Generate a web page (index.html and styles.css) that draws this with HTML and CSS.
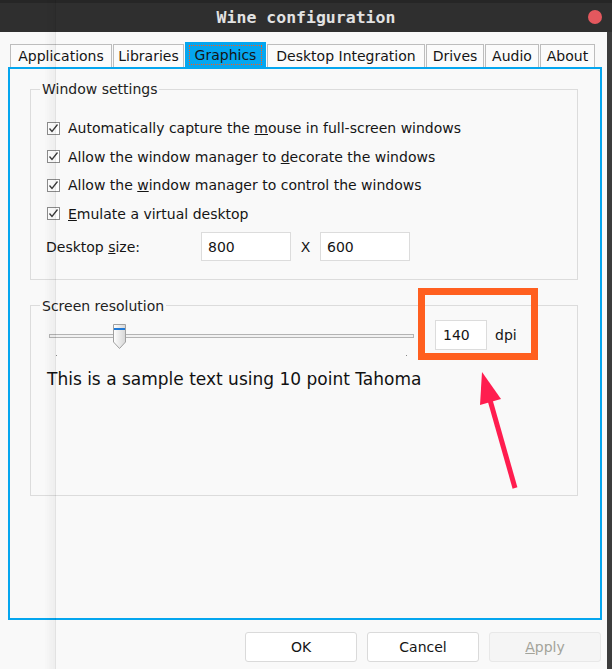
FILE: index.html
```html
<!DOCTYPE html>
<html>
<head>
<meta charset="utf-8">
<title>Wine configuration</title>
<link rel="stylesheet" href="styles.css">
</head>
<body>
<div class="screen">
  <header class="titlebar">
    <span></span>
    <span class="title">Wine configuration</span>
    <span class="close"></span>
  </header>
  <div class="body">
    <main class="dialog">
      <nav class="tabs">
        <div class="tab tab-apps">Applications</div>
        <div class="tab tab-libs">Libraries</div>
        <div class="tab tab-gfx active"><span class="focus">Graphics</span></div>
        <div class="tab tab-desk">Desktop Integration</div>
        <div class="tab tab-drives">Drives</div>
        <div class="tab tab-audio">Audio</div>
        <div class="tab tab-about">About</div>
      </nav>
      <section class="panel">
        <fieldset class="group g1">
          <legend>Window settings</legend>
          <div class="checks">
            <label class="check"><svg class="box" width="13" height="13" viewBox="0 0 13 13"><rect x="0.5" y="0.5" width="12" height="12" fill="#fff" stroke="#8c8c8c"/><path d="M2.5 6.5 L5 9.5 L10.5 2.5" fill="none" stroke="#3a3a3a" stroke-width="1.3"/></svg><span>Automatically capture the <u>m</u>ouse in full-screen windows</span></label>
            <label class="check"><svg class="box" width="13" height="13" viewBox="0 0 13 13"><rect x="0.5" y="0.5" width="12" height="12" fill="#fff" stroke="#8c8c8c"/><path d="M2.5 6.5 L5 9.5 L10.5 2.5" fill="none" stroke="#3a3a3a" stroke-width="1.3"/></svg><span>Allow the window manager to <u>d</u>ecorate the windows</span></label>
            <label class="check"><svg class="box" width="13" height="13" viewBox="0 0 13 13"><rect x="0.5" y="0.5" width="12" height="12" fill="#fff" stroke="#8c8c8c"/><path d="M2.5 6.5 L5 9.5 L10.5 2.5" fill="none" stroke="#3a3a3a" stroke-width="1.3"/></svg><span>Allow the <u>w</u>indow manager to control the windows</span></label>
            <label class="check"><svg class="box" width="13" height="13" viewBox="0 0 13 13"><rect x="0.5" y="0.5" width="12" height="12" fill="#fff" stroke="#8c8c8c"/><path d="M2.5 6.5 L5 9.5 L10.5 2.5" fill="none" stroke="#3a3a3a" stroke-width="1.3"/></svg><span><u>E</u>mulate a virtual desktop</span></label>
          </div>
          <div class="size-row">
            <span class="size-label">Desktop <u>s</u>ize:</span>
            <div class="field size">800</div>
            <span class="times">X</span>
            <div class="field size">600</div>
          </div>
        </fieldset>
        <fieldset class="group g2">
          <legend>Screen resolution</legend>
          <div class="res-row">
            <div class="slider">
              <div class="track"></div>
              <svg class="thumb" width="13" height="25" viewBox="0 0 13 25">
                <defs><linearGradient id="tg" x1="0" y1="0" x2="1" y2="0"><stop offset="0" stop-color="#ffffff"/><stop offset="1" stop-color="#d6d6d6"/></linearGradient></defs>
                <path d="M0.5 0.5 H12.5 V18 L6.5 24.5 L0.5 18 Z" fill="url(#tg)" stroke="#a0a0a0"/>
                <rect x="1" y="4" width="11" height="2" fill="#2079d6"/>
              </svg>
              <i class="tick tick-l"></i>
              <i class="tick tick-r"></i>
            </div>
            <div class="field dpi">140</div>
            <span class="unit">dpi</span>
          </div>
          <p class="sample">This is a sample text using 10 point Tahoma</p>
        </fieldset>
      </section>
      <footer class="buttons">
        <button class="btn">OK</button>
        <button class="btn">Cancel</button>
        <button class="btn disabled"><u>A</u>pply</button>
      </footer>
    </main>
    <div class="edge"></div>
  </div>
  <div class="ghost"></div>
  <div class="highlight"></div>
  <svg class="arrow" width="612" height="669" viewBox="0 0 612 669">
    <line x1="515" y1="488" x2="490" y2="400" stroke="#ff1d4f" stroke-width="5"/>
    <polygon points="482,372 501,399 480,405" fill="#ff1d4f"/>
  </svg>
</div>
</body>
</html>
```
FILE: styles.css
```css
* { box-sizing: border-box; }
html, body { margin: 0; padding: 0; }
body {
  width: 612px;
  height: 669px;
  overflow: hidden;
  background: #3a3a3a;
  font-family: "DejaVu Sans", "Liberation Sans", sans-serif;
  font-size: 14px;
  color: #151515;
}
.screen {
  position: relative;
  width: 612px;
  height: 669px;
}
.titlebar {
  height: 32px;
  background: #2f2f2f;
  border-top: 3px solid #262626;
  display: grid;
  grid-template-columns: 1fr auto 1fr;
  align-items: center;
}
.title {
  font-family: "DejaVu Sans Mono", monospace;
  font-weight: bold;
  font-size: 16.5px;
  color: #e2e2e2;
}
.close {
  justify-self: end;
  width: 14px;
  height: 14px;
  border-radius: 50%;
  background: #e4585e;
  margin-right: 10px;
  margin-top: -1px;
}
.body {
  display: flex;
  height: 637px;
}
.dialog {
  flex: 1;
  background: #f9f9f9;
}
.edge {
  width: 5px;
  background: #3c3c3c;
}
.tabs {
  display: flex;
  align-items: flex-end;
  gap: 1px;
  padding: 10px 0 0 10px;
  height: 35px;
}
.tab {
  height: 23px;
  padding: 0;
  border: 1px solid #bdbdbd;
  border-bottom: none;
  background: #fbfbfb;
  display: flex;
  align-items: center;
  justify-content: center;
  white-space: nowrap;
}
.tab-apps { width: 102px; }
.tab-libs { width: 71px; }
.tab-gfx { width: 81px; }
.tab-desk { width: 158px; }
.tab-drives { width: 58px; }
.tab-audio { width: 54px; }
.tab-about { width: 55px; }
.tab.active {
  height: 25px;
  background: #05a6ef;
  border-color: #05a6ef;
}
.focus {
  border: 1px dotted #ff5a1a;
  width: 73px;
  height: 20px;
  display: flex;
  align-items: center;
  justify-content: center;
}
.panel {
  margin-left: 8px;
  width: 594px;
  height: 553px;
  border: 2px solid #05a6ef;
  padding-top: 11px;
}
.group {
  margin: 0 0 0 20px;
  width: 548px;
  border: 1px solid #dcdcdc;
  padding: 0;
}
.group legend {
  margin-left: 9px;
  padding: 0 2px;
  line-height: 18px;
  color: #222;
}
.checks {
  padding-top: 16px;
}
.check {
  display: flex;
  align-items: center;
  gap: 8px;
  height: 28.5px;
  padding-left: 16px;
}
.box { flex: none; }
.size-row {
  display: flex;
  align-items: center;
  margin-top: 4px;
  height: 29px;
  padding-left: 15px;
  margin-bottom: 18px;
}
.size-label { width: 155px; }
.field {
  background: #fff;
  border: 1px solid #dcdcdc;
  display: flex;
  align-items: center;
  padding-left: 6px;
}
.field.size {
  width: 90px;
  height: 29px;
}
.times {
  width: 29px;
  text-align: center;
}
.g2 {
  margin-top: 16.5px;
  padding-bottom: 106px;
}
.res-row {
  display: flex;
  align-items: center;
  margin-top: 5px;
  height: 30px;
  padding-left: 18px;
}
.slider {
  position: relative;
  width: 365px;
  height: 30px;
}
.track {
  margin-top: 14px;
  height: 4px;
  border: 1px solid #b4b4b4;
  background: #f2f2f2;
}
.thumb {
  position: absolute;
  left: 64px;
  top: 4px;
}
.tick {
  position: absolute;
  top: 35px;
  width: 1px;
  height: 1px;
  background: #888;
}
.tick-l { left: 7px; }
.tick-r { left: 357px; }
.field.dpi {
  margin-left: 21px;
  width: 52px;
  height: 30px;
  padding-left: 7px;
}
.unit { margin-left: 8px; }
.sample {
  margin: 19px 0 0 16px;
  font-size: 17px;
  line-height: 20px;
  color: #111;
}
.buttons {
  display: flex;
  justify-content: flex-end;
  gap: 10px;
  margin-top: 12px;
  padding-right: 6px;
}
.btn {
  width: 112px;
  height: 30px;
  background: #fff;
  border: 1px solid #dadada;
  border-radius: 3px;
  font-family: inherit;
  font-size: 14px;
  color: #151515;
  padding: 0;
}
.btn.disabled {
  background: #f5f5f5;
  border-color: #e8e8e8;
  color: #a3a39a;
}
.ghost {
  position: absolute;
  left: 44px;
  top: 0;
  width: 12px;
  height: 669px;
  background: linear-gradient(to right, rgba(0,0,0,0), rgba(0,0,0,0.045));
  border-right: 1px solid rgba(0,0,0,0.09);
  pointer-events: none;
}
.highlight {
  position: absolute;
  left: 418px;
  top: 288px;
  width: 120px;
  height: 72px;
  border: 7px solid #ff5f1f;
  pointer-events: none;
}
.arrow {
  position: absolute;
  left: 0;
  top: 0;
  pointer-events: none;
}
```
